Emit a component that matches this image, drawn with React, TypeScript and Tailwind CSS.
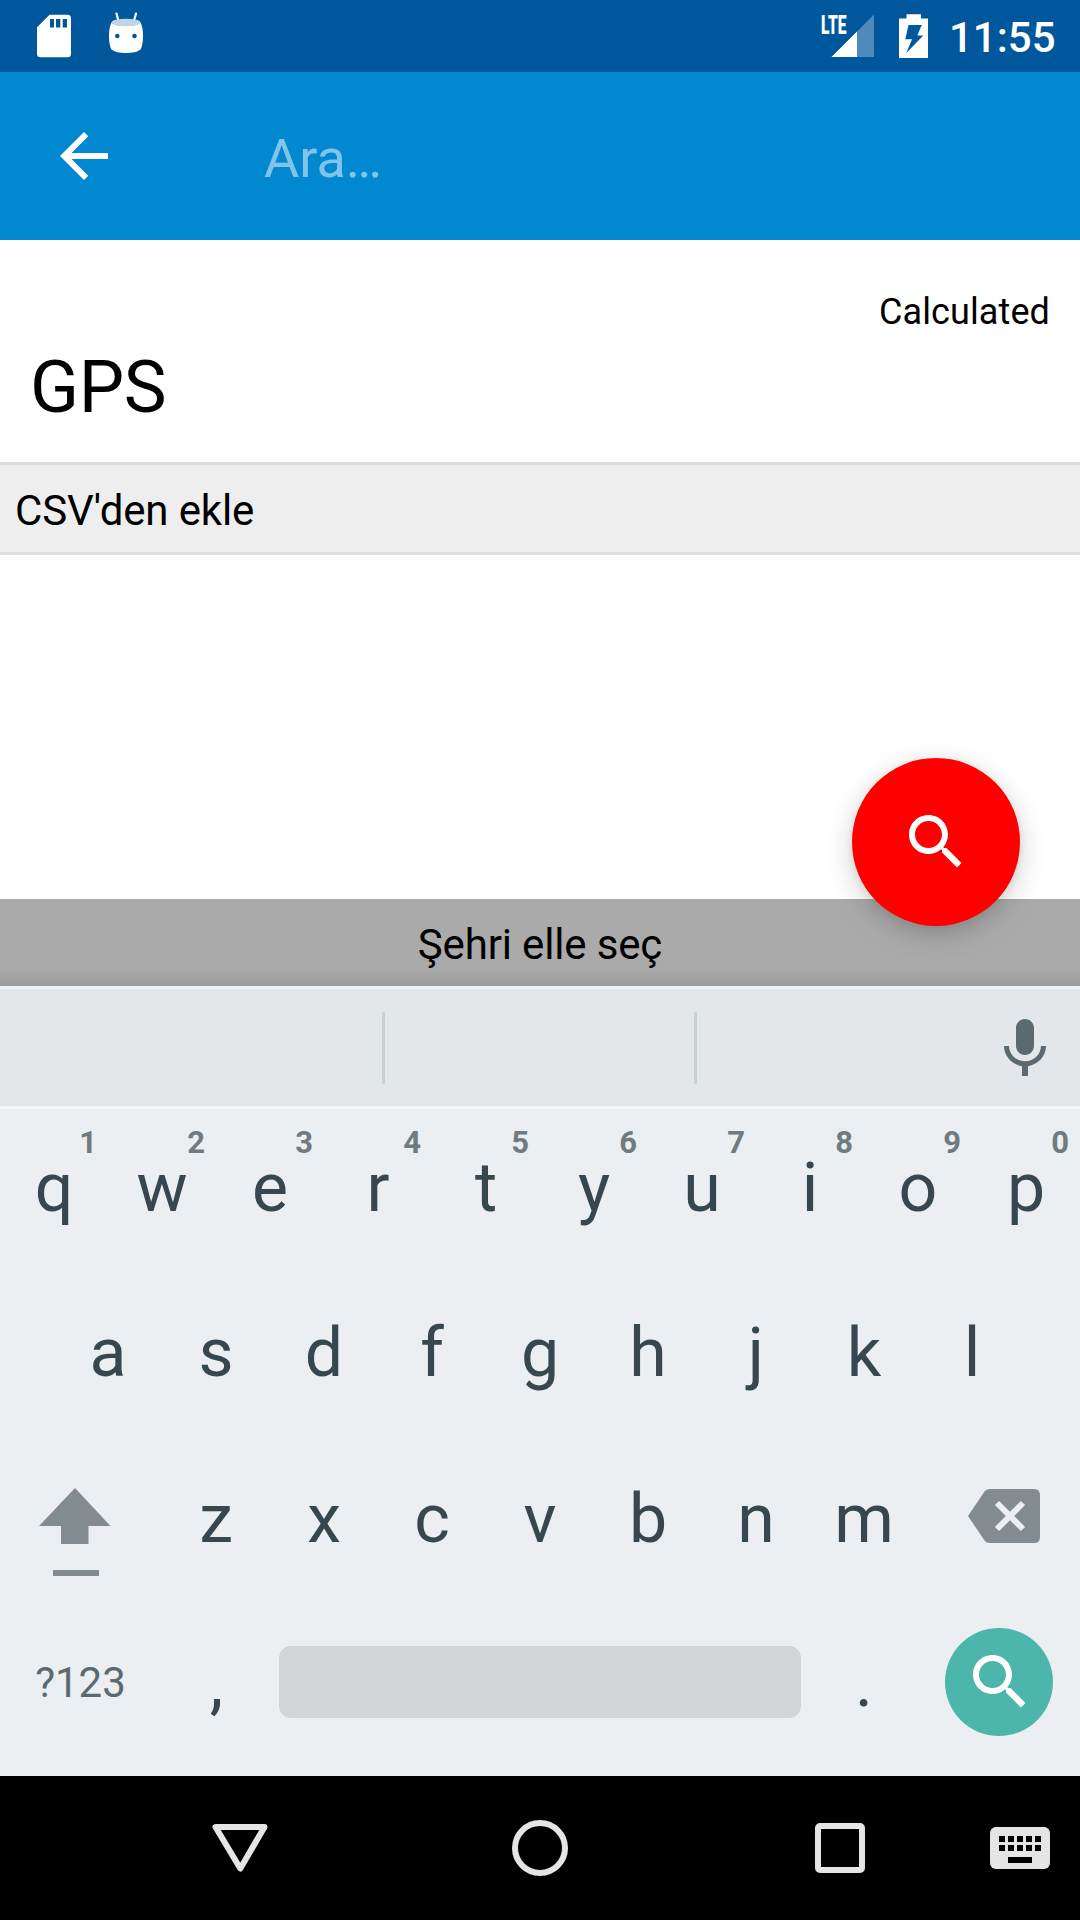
import type { ReactNode } from "react";

const SEARCH =
  "M15.5 14h-.79l-.28-.27C15.41 12.59 16 11.11 16 9.5 16 5.91 13.09 3 9.5 3S3 5.91 3 9.5 5.91 16 9.5 16c1.61 0 3.09-.59 4.23-1.57l.27.28v.79l5 4.99L20.49 19l-4.99-5zm-6 0C7.01 14 5 11.99 5 9.5S7.01 5 9.5 5 14 7.01 14 9.5 11.99 14 9.5 14z";

function Icon({ d, className }: { d: string; className?: string }) {
  return (
    <svg viewBox="0 0 24 24" width="72" height="72" className={className} fill="currentColor">
      <path d={d} />
    </svg>
  );
}

function StatusBar() {
  return (
    <header className="flex h-[72px] items-start justify-between bg-[#01579b] text-white">
      <div className="flex">
        <svg width="160" height="72" viewBox="0 0 160 72">
          <path
            fill="#fff"
            fillRule="evenodd"
            d="M49.5 14.8H67.5Q71 14.8 71 18.3V53.7Q71 57.2 67.5 57.2H40.5Q37 57.2 37 53.7V27.3ZM50 19V27.5H54V19ZM56 19V27.5H60.3V19ZM62.7 19V27.5H67V19Z"
          />
          <path d="M116.5 13.5L118.5 21.5M136 13.5L133.8 21.5" stroke="#fff" strokeWidth="2.2" strokeLinecap="round" />
          <path
            fill="#fff"
            d="M111.5 22.5C109.5 26 109 31 109 36C109 42 110 47 111.5 49.5C114 52 120 53 126 53C132 53 138 52 140.5 49.5C142 47 143 42 143 36C143 31 142.5 26 140.5 22.5C137 27 115 27 111.5 22.5Z"
          />
          <ellipse cx="126" cy="22.5" rx="14.5" ry="3.8" fill="#bfd5e6" />
          <circle cx="117.3" cy="36" r="2.3" fill="#01579b" />
          <circle cx="134.5" cy="36" r="2.3" fill="#01579b" />
        </svg>
      </div>
      <div className="flex">
        <div className="relative">
          <svg width="130" height="72" viewBox="820 0 130 72">
            <path d="M874 14.5V57H831.5Z" fill="#4f8aba" />
            <path d="M857 31.5V57H831.5Z" fill="#fff" />
            <path
              fill="#fff"
              fillRule="evenodd"
              d="M906.5 14.2H921V18.5H928V58H899V18.5H906.5ZM908.5 25L905.3 39.3H912L906.3 53L923.3 35.5H917.3L921.8 25Z"
            />
          </svg>
          <span className="absolute left-[1px] top-[10px] origin-left scale-x-[0.6] text-[26px] font-black leading-[30px]">
            LTE
          </span>
        </div>
        <span className="-ml-[1px] mt-[13px] w-[131px] text-[42px] font-medium leading-[50px]">11:55</span>
      </div>
    </header>
  );
}

function Letter({ children, hint }: { children: ReactNode; hint?: string }) {
  return (
    <div className="relative flex h-full w-[108px] items-center justify-center text-[68px] leading-[80px] text-[#37474f]">
      {children}
      {hint && (
        <span className="absolute right-[11px] top-[16px] text-[31px] font-bold leading-[36px] text-[#6f7b80]">
          {hint}
        </span>
      )}
    </div>
  );
}

function Keyboard() {
  return (
    <section className="relative bg-[#eceff1]">
      <div className="relative flex h-[123px] items-center border-y-[3px] border-t-[#eff2f4] border-b-[#f6f8f9] bg-[#e3e7e9]">
        <div className="ml-[382px] mt-[1px] h-[72px] w-[312px] border-l-[3px] border-[#cacfd2]" />
        <div className="mt-[1px] h-[72px] w-[295px] border-l-[3px] border-[#cacfd2]" />
        <Icon
          className="mt-[2px] text-[#5b6a71]"
          d="M12 14c1.66 0 2.99-1.34 2.99-3L15 5c0-1.66-1.34-3-3-3S9 3.34 9 5v6c0 1.66 1.34 3 3 3zm5.3-3c0 3-2.54 5.1-5.3 5.1S6.7 14 6.7 11H5c0 3.41 2.72 6.23 6 6.72V21h2v-3.28c3.28-.48 6-3.3 6-6.72h-1.7z"
        />
      </div>
      <div className="flex h-[158px]">
        {"qwertyuiop".split("").map((c, i) => (
          <Letter key={c} hint={String((i + 1) % 10)}>
            {c}
          </Letter>
        ))}
      </div>
      <div className="flex h-[172px] justify-center">
        {"asdfghjkl".split("").map((c) => (
          <Letter key={c}>{c}</Letter>
        ))}
      </div>
      <div className="flex h-[158px]">
        <svg width="162" height="158" viewBox="0 1439 162 158" fill="#828b8f">
          <path d="M75 1488L110.5 1526H88.5V1544H61V1526H39Z" />
          <path d="M53 1570H99V1576H53Z" />
        </svg>
        {"zxcvbnm".split("").map((c) => (
          <Letter key={c}>
            <span className="pt-[1px]">{c}</span>
          </Letter>
        ))}
        <svg width="162" height="158" viewBox="918 1439 162 158">
          <path
            fill="#828b8f"
            d="M968 1516L984.5 1491.5Q986.3 1489 989.5 1489H1034Q1040 1489 1040 1495V1537Q1040 1543 1034 1543H989.5Q986.3 1543 984.5 1540.5Z"
          />
          <path d="M997 1503L1023 1529M1023 1503L997 1529" stroke="#eceff1" strokeWidth="6" />
        </svg>
      </div>
      <div className="flex h-[172px] items-center">
        <div className="w-[162px] pr-[1px] text-center text-[42px] leading-[50px] text-[#5b6a71]">?123</div>
        <Letter>
          <span className="pl-[1px]">,</span>
        </Letter>
        <div className="mx-[9px] mb-[2px] h-[72px] w-[522px] rounded-[12px] bg-[#d1d5d8]" />
        <Letter>.</Letter>
        <div className="mb-[2px] ml-[27px] flex h-[108px] w-[108px] items-center justify-center rounded-full bg-[#4db6ac] pl-[2px] text-white">
          <Icon d={SEARCH} />
        </div>
      </div>
      <div className="h-[7px]" />
    </section>
  );
}

function NavBar() {
  return (
    <nav className="flex h-[144px] items-center bg-black">
      <svg width="60" height="60" viewBox="210 1818 60 60" className="ml-[210px]">
        <path
          d="M215.5 1827H264.5L240.3 1868.5Z"
          fill="none"
          stroke="#e5e5e5"
          strokeWidth="6"
          strokeLinejoin="round"
        />
      </svg>
      <div className="ml-[242px] h-[56px] w-[56px] rounded-full border-[6px] border-[#e5e5e5]" />
      <div className="ml-[247px] h-[50px] w-[50px] rounded-[5px] border-[6px] border-[#e5e5e5]" />
      <svg width="60" height="42" viewBox="0 0 60 42" className="ml-[125px]">
        <rect width="60" height="42" rx="6" fill="#e5e5e5" />
        {[9, 18, 27, 36, 45].map((x) => (
          <path key={x} d={`M${x} 9h6v6h-6zM${x} 18h6v6h-6z`} />
        ))}
        <path d="M18 30h24v6H18z" />
      </svg>
    </nav>
  );
}

export default function App() {
  return (
    <div className="flex h-[1920px] w-[1080px] flex-col overflow-hidden bg-white font-[Roboto,sans-serif] text-black">
      <StatusBar />
      <div className="flex h-[168px] items-center bg-[#0288d1] pl-[48px] text-white">
        <Icon d="M20 11H7.83l5.59-5.59L12 4l-8 8 8 8 1.41-1.41L7.83 13H20v-2z" />
        <span className="ml-[144px] mt-[5px] text-[54px] leading-[64px] text-white/50">Ara…</span>
      </div>
      <div className="h-[222px] px-[30px] pt-[51px]">
        <div className="text-right text-[36px] leading-[42px] tracking-[0.1px]">Calculated</div>
        <div className="mt-[13px] text-[72px] leading-[84px] tracking-[-0.4px]">GPS</div>
      </div>
      <div className="flex h-[93px] items-center border-y-[3px] border-[#dedede] bg-[#eeeeee] pl-[15px] pt-[4px] text-[42px] leading-[50px] tracking-[-0.13px]">
        CSV'den ekle
      </div>
      <div className="relative flex-1">
        <div className="absolute -bottom-[27px] right-[60px] z-10 flex h-[168px] w-[168px] items-center justify-center rounded-full bg-[#ff0000] text-white shadow-[0_8px_28px_rgba(0,0,0,0.18),0_2px_10px_rgba(0,0,0,0.08)]">
          <Icon d={SEARCH} />
        </div>
      </div>
      <div className="flex h-[87px] items-center justify-center bg-[#aaaaaa] bg-linear-to-t from-black/8 to-transparent to-20% pt-[4px] text-[42px] leading-[50px] tracking-[-0.16px]">
        Şehri elle seç
      </div>
      <Keyboard />
      <NavBar />
    </div>
  );
}
